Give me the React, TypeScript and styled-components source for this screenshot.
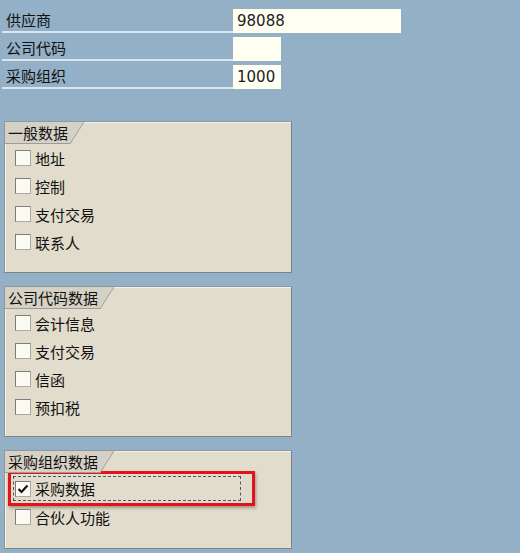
import styled, { createGlobalStyle } from "styled-components";

const GlobalStyle = createGlobalStyle`
  html, body {
    margin: 0;
    padding: 0;
    background: #93b0c6;
  }
  body {
    font-family: "Noto Sans CJK SC", "DejaVu Sans", sans-serif;
    color: #111;
  }
`;

const Page = styled.div`
  width: 520px;
  height: 553px;
  overflow: hidden;
  background: #93b0c6;
  padding-top: 9px;
  box-sizing: border-box;
`;

const HeaderForm = styled.div`
  display: grid;
  grid-template-columns: 231px auto;
  row-gap: 4px;
  padding-left: 2px;
`;

const Label = styled.div`
  height: 24px;
  box-sizing: border-box;
  padding-left: 4px;
  border-bottom: 2px solid #d9e6ef;
  font-size: 15px;
  line-height: 22px;
`;

const Field = styled.div<{ $width: number }>`
  width: ${({ $width }) => $width}px;
  height: 24px;
  box-sizing: border-box;
  background: #fffff2;
  padding-left: 4px;
  font-family: "DejaVu Sans", sans-serif;
  font-size: 15px;
  line-height: 24px;
  color: #222;
`;

const Groups = styled.div`
  margin-top: 32px;
  margin-left: 4px;
  display: flex;
  flex-direction: column;
  gap: 13px;
`;

const GroupBox = styled.div<{ $height: number }>`
  width: 288px;
  height: ${({ $height }) => $height}px;
  box-sizing: border-box;
  background: #e1dccc;
  border: 1px solid #8e979c;
  border-right-color: #7d8489;
  border-bottom-color: #7d8489;
  box-shadow: inset 1px 1px 0 #f4f1e8;
`;

const Tab = styled.div`
  display: flex;
  align-items: center;
  width: fit-content;
  height: 21px;
  position: relative;
  background: #d5d1c5;
  border-bottom: 1px solid #9c9d9a;
  padding: 0 2px 0 3px;
  font-size: 15px;
  line-height: 21px;
  white-space: nowrap;

  &::after {
    content: "";
    position: absolute;
    top: 0;
    right: -14px;
    width: 14px;
    height: 22px;
    background: linear-gradient(
      to bottom right,
      #d5d1c5 calc(50% - 0.8px),
      #9c9d9a 50%,
      transparent calc(50% + 0.8px)
    );
  }
`;

const ItemList = styled.div`
  display: flex;
  flex-direction: column;
`;

const Item = styled.div`
  height: 28px;
  display: flex;
  align-items: center;
  padding-left: 10px;
  font-size: 15px;
`;

const FocusItem = styled.div`
  margin: -2px 0 -3px 3px;
  width: 247px;
  height: 35px;
  box-sizing: border-box;
  border: 3px solid #e0141b;
  box-shadow: 1px 2px 3px rgba(90, 60, 40, 0.45);
  padding: 2px 11px 2px 2px;
  display: flex;
`;

const FocusInner = styled.div`
  flex: 1;
  display: flex;
  align-items: center;
  border: 1px dashed #55506a;
  padding-left: 1px;
  font-size: 15px;
`;

const Box = styled.span`
  width: 16px;
  height: 16px;
  box-sizing: border-box;
  margin-right: 4px;
  background: #fbfaf3;
  border: 1px solid #7c7c78;
  border-right-color: #a9a8a2;
  border-bottom-color: #a9a8a2;
  display: inline-flex;
  align-items: center;
  justify-content: center;
  flex-shrink: 0;
`;

const CheckBox = ({ checked }: { checked?: boolean }) => (
  <Box>
    {checked && (
      <svg width="12" height="12" viewBox="0 0 12 12">
        <path d="M1.5 6 L4.5 9 L10.5 2.5" fill="none" stroke="#111" strokeWidth="2.2" />
      </svg>
    )}
  </Box>
);

const Group = ({
  title,
  items,
  height,
  focused,
}: {
  title: string;
  items: string[];
  height: number;
  focused?: string;
}) => (
  <GroupBox $height={height}>
    <Tab>{title}</Tab>
    <ItemList>
      {focused && (
        <FocusItem>
          <FocusInner>
            <CheckBox checked />
            {focused}
          </FocusInner>
        </FocusItem>
      )}
      {items.map((it) => (
        <Item key={it}>
          <CheckBox />
          {it}
        </Item>
      ))}
    </ItemList>
  </GroupBox>
);

export default function App() {
  return (
    <Page>
      <GlobalStyle />
      <HeaderForm>
        <Label>供应商</Label>
        <Field $width={168}>98088</Field>
        <Label>公司代码</Label>
        <Field $width={48}></Field>
        <Label>采购组织</Label>
        <Field $width={48}>1000</Field>
      </HeaderForm>
      <Groups>
        <Group title="一般数据" height={152} items={["地址", "控制", "支付交易", "联系人"]} />
        <Group
          title="公司代码数据"
          height={151}
          items={["会计信息", "支付交易", "信函", "预扣税"]}
        />
        <Group title="采购组织数据" height={99} focused="采购数据" items={["合伙人功能"]} />
      </Groups>
    </Page>
  );
}
